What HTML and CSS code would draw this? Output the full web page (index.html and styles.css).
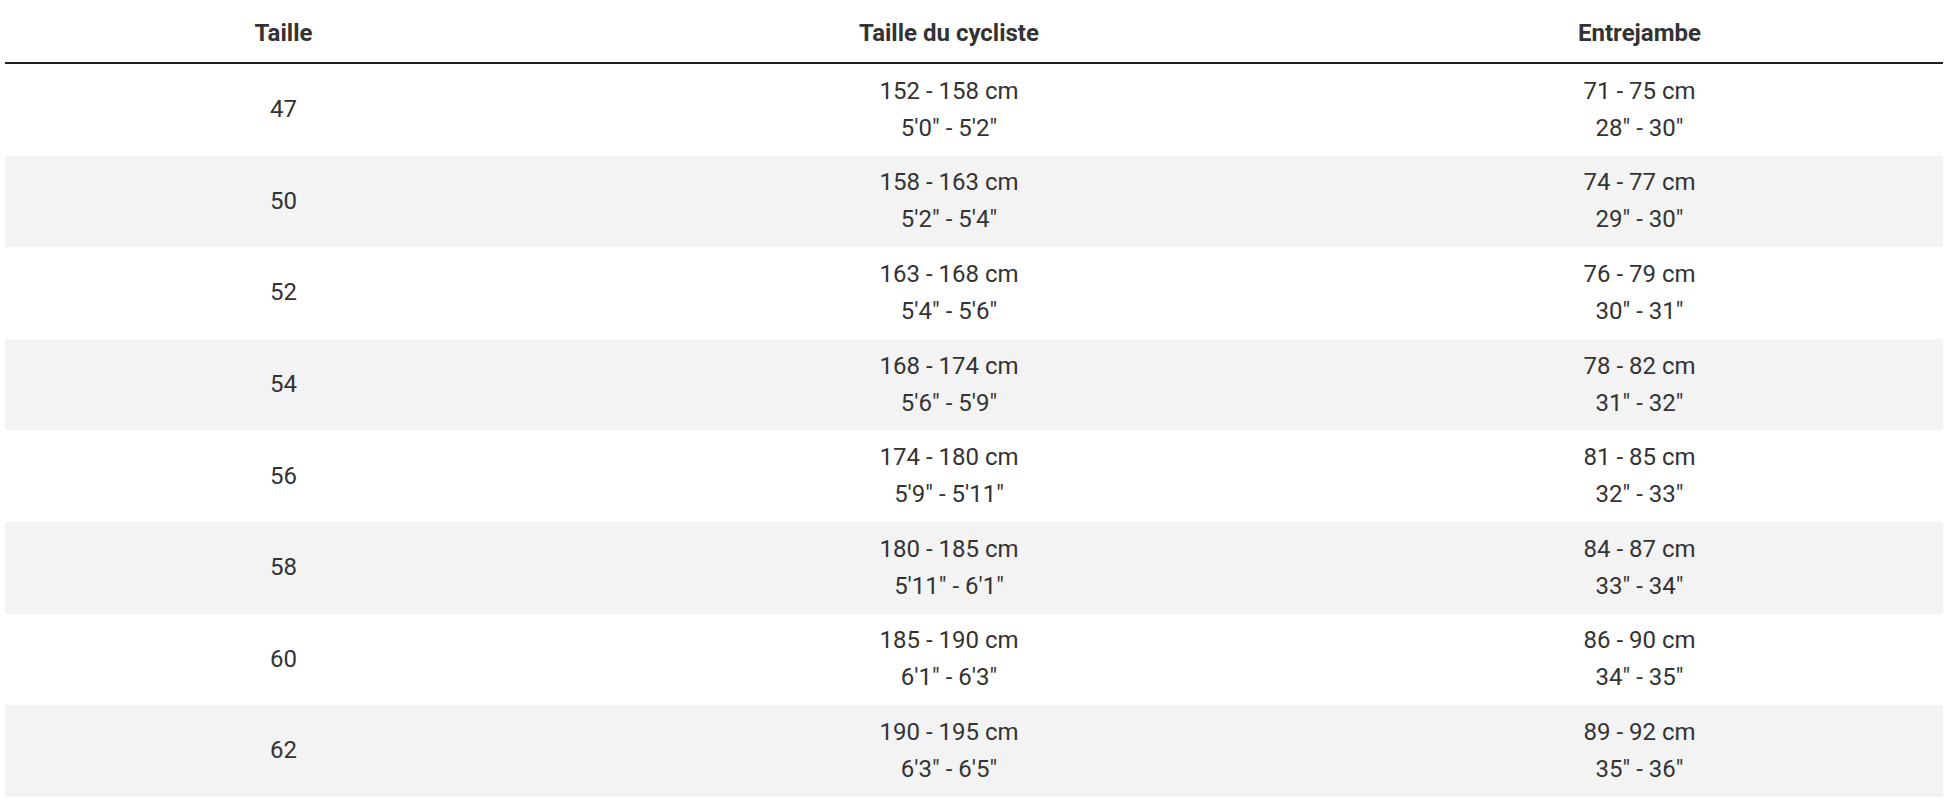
FILE: index.html
```html
<!DOCTYPE html>
<html lang="fr">
<head>
<meta charset="utf-8">
<title>Tableau des tailles</title>
<link rel="stylesheet" href="styles.css">
</head>
<body>
<table class="sizes">
  <colgroup>
    <col class="c1">
    <col class="c2">
    <col class="c3">
  </colgroup>
  <thead>
    <tr><th>Taille</th><th>Taille du cycliste</th><th>Entrejambe</th></tr>
  </thead>
  <tbody>
    <tr><td>47</td><td>152 - 158 cm<br>5'0" - 5'2"</td><td>71 - 75 cm<br>28" - 30"</td></tr>
    <tr><td>50</td><td>158 - 163 cm<br>5'2" - 5'4"</td><td>74 - 77 cm<br>29" - 30"</td></tr>
    <tr><td>52</td><td>163 - 168 cm<br>5'4" - 5'6"</td><td>76 - 79 cm<br>30" - 31"</td></tr>
    <tr><td>54</td><td>168 - 174 cm<br>5'6" - 5'9"</td><td>78 - 82 cm<br>31" - 32"</td></tr>
    <tr><td>56</td><td>174 - 180 cm<br>5'9" - 5'11"</td><td>81 - 85 cm<br>32" - 33"</td></tr>
    <tr><td>58</td><td>180 - 185 cm<br>5'11" - 6'1"</td><td>84 - 87 cm<br>33" - 34"</td></tr>
    <tr><td>60</td><td>185 - 190 cm<br>6'1" - 6'3"</td><td>86 - 90 cm<br>34" - 35"</td></tr>
    <tr><td>62</td><td>190 - 195 cm<br>6'3" - 6'5"</td><td>89 - 92 cm<br>35" - 36"</td></tr>
  </tbody>
</table>
</body>
</html>
```

FILE: styles.css
```css
html, body {
  margin: 0;
  padding: 0;
  background: #ffffff;
}
body {
  font-family: Roboto, "Liberation Sans", Arial, sans-serif;
  color: #333333;
}
.sizes {
  margin-left: 5px;
  width: 1938px;
  border-collapse: collapse;
  table-layout: fixed;
}
.c1 { width: 557px; }
.c2 { width: 774px; }
.c3 { width: 607px; }
.sizes th {
  height: 59px;
  padding: 3px 0 0;
  font-size: 24px;
  font-weight: 700;
  line-height: 28px;
  text-align: center;
  vertical-align: middle;
  border-bottom: 2px solid #1e1e1e;
  color: #333333;
}
.sizes td {
  padding: 8.8px 0;
  font-size: 24px;
  line-height: 37px;
  text-align: center;
  vertical-align: middle;
}
.sizes tbody tr:nth-child(even) td {
  background: #f3f3f3;
}
```
